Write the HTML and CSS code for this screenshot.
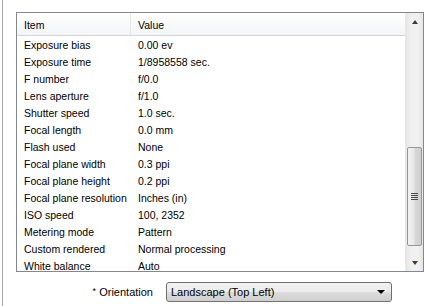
FILE: index.html
```html
<!DOCTYPE html>
<html lang="en">
<head>
    <meta charset="UTF-8">
    <title>Image Properties</title>
    <link rel="stylesheet" href="styles.css">
</head>
<body>
    <div class="panel">
        <!-- Properties list -->
        <div class="listview">
            <div class="list-main">
                <div class="list-header">
                    <div class="col-item">Item</div>
                    <div class="col-value">Value</div>
                </div>
                <div class="list-body">
                    <div class="row"><div class="col-item">Exposure bias</div><div class="col-value">0.00 ev</div></div>
                    <div class="row"><div class="col-item">Exposure time</div><div class="col-value">1/8958558 sec.</div></div>
                    <div class="row"><div class="col-item">F number</div><div class="col-value">f/0.0</div></div>
                    <div class="row"><div class="col-item">Lens aperture</div><div class="col-value">f/1.0</div></div>
                    <div class="row"><div class="col-item">Shutter speed</div><div class="col-value">1.0 sec.</div></div>
                    <div class="row"><div class="col-item">Focal length</div><div class="col-value">0.0 mm</div></div>
                    <div class="row"><div class="col-item">Flash used</div><div class="col-value">None</div></div>
                    <div class="row"><div class="col-item">Focal plane width</div><div class="col-value">0.3 ppi</div></div>
                    <div class="row"><div class="col-item">Focal plane height</div><div class="col-value">0.2 ppi</div></div>
                    <div class="row"><div class="col-item">Focal plane resolution</div><div class="col-value">Inches (in)</div></div>
                    <div class="row"><div class="col-item">ISO speed</div><div class="col-value">100, 2352</div></div>
                    <div class="row"><div class="col-item">Metering mode</div><div class="col-value">Pattern</div></div>
                    <div class="row"><div class="col-item">Custom rendered</div><div class="col-value">Normal processing</div></div>
                    <div class="row"><div class="col-item">White balance</div><div class="col-value">Auto</div></div>
                </div>
            </div>

            <!-- Scrollbar -->
            <div class="scrollbar">
                <div class="scroll-btn"><span class="arrow-up"></span></div>
                <div class="scroll-track">
                    <div class="scroll-space"></div>
                    <div class="scroll-thumb">
                        <span class="grip"></span>
                    </div>
                </div>
                <div class="scroll-btn"><span class="arrow-down"></span></div>
            </div>
        </div>

        <!-- Orientation -->
        <div class="form-row">
            <label class="form-label"><span class="required">*</span> Orientation</label>
            <div class="select">
                <span>Landscape (Top Left)</span>
                <span class="select-arrow"></span>
            </div>
        </div>
    </div>
</body>
</html>
```

FILE: styles.css
```css
/* General */
body {
    margin: 0;
    background: #ffffff;
    font-family: 'Liberation Sans', Arial, sans-serif;
    font-size: 10.5px;
    color: #000000;
}

.panel {
    margin-left: 2px;
    height: 306px;
    box-sizing: border-box;
    border-left: 1px solid #a8a8a8;
    padding: 12px 0 0 13px;
}

/* List view */
.listview {
    display: flex;
    width: 408px;
    height: 260px;
    box-sizing: border-box;
    border: 1px solid #828790;
    background: #ffffff;
}

.list-main {
    flex: 1;
    overflow: hidden;
}

.list-header {
    display: flex;
    height: 23px;
    box-sizing: border-box;
    align-items: center;
    background: linear-gradient(#ffffff, #f3f4f6);
    border-bottom: 1px solid #d5d5d5;
    padding-top: 2px;
}

.list-header .col-item {
    border-right: 1px solid #e3e5e7;
    height: 22px;
    line-height: 20px;
    margin-top: -2px;
    box-sizing: border-box;
    padding-top: 2px;
}

.list-body {
    padding-top: 1px;
}

.row {
    display: flex;
    height: 17px;
    line-height: 17px;
}

.col-item {
    width: 114px;
    padding-left: 7px;
    box-sizing: border-box;
    white-space: nowrap;
}

.col-value {
    padding-left: 7px;
    white-space: nowrap;
}

/* Scrollbar */
.scrollbar {
    width: 17px;
    display: flex;
    flex-direction: column;
    background: linear-gradient(90deg, #e6e6e6, #f0f0f0 30%, #f0f0f0 70%, #e6e6e6);
    border-left: 1px solid #e8e8e8;
}

.scroll-btn {
    height: 17px;
    display: flex;
    align-items: center;
    justify-content: center;
}

.arrow-up {
    width: 0;
    height: 0;
    border-left: 3.5px solid transparent;
    border-right: 3.5px solid transparent;
    border-bottom: 4px solid #3c3c3c;
}

.arrow-down {
    width: 0;
    height: 0;
    border-left: 3.5px solid transparent;
    border-right: 3.5px solid transparent;
    border-top: 4px solid #3c3c3c;
}

.scroll-track {
    flex: 1;
    display: flex;
    flex-direction: column;
}

.scroll-space {
    height: 117px;
}

.scroll-thumb {
    height: 99px;
    margin: 0 1px;
    box-sizing: border-box;
    border: 1px solid #979797;
    border-radius: 2px;
    background: linear-gradient(90deg, #f2f2f2, #e8e8e8 45%, #d8d8d8 55%, #cfcfcf);
    display: flex;
    align-items: center;
    justify-content: center;
}

.grip {
    width: 7px;
    height: 7px;
    background: repeating-linear-gradient(#4a4a4a 0 1px, transparent 1px 2px);
}

/* Orientation row */
.form-row {
    display: flex;
    align-items: center;
    margin-top: 10px;
}

.form-label {
    width: 137px;
    margin-right: 13px;
    text-align: right;
    font-size: 11px;
}

.required {
    font-size: 9px;
    vertical-align: 2px;
}

.select {
    width: 226px;
    height: 20px;
    box-sizing: border-box;
    border: 1px solid #707070;
    border-radius: 3px;
    background: linear-gradient(#f2f2f2, #ebebeb 50%, #dddddd 51%, #cfcfcf);
    display: flex;
    align-items: center;
    justify-content: space-between;
    padding: 0 6px 0 4px;
    font-size: 11px;
}

.select-arrow {
    width: 0;
    height: 0;
    border-left: 4px solid transparent;
    border-right: 4px solid transparent;
    border-top: 4px solid #000000;
}
```
